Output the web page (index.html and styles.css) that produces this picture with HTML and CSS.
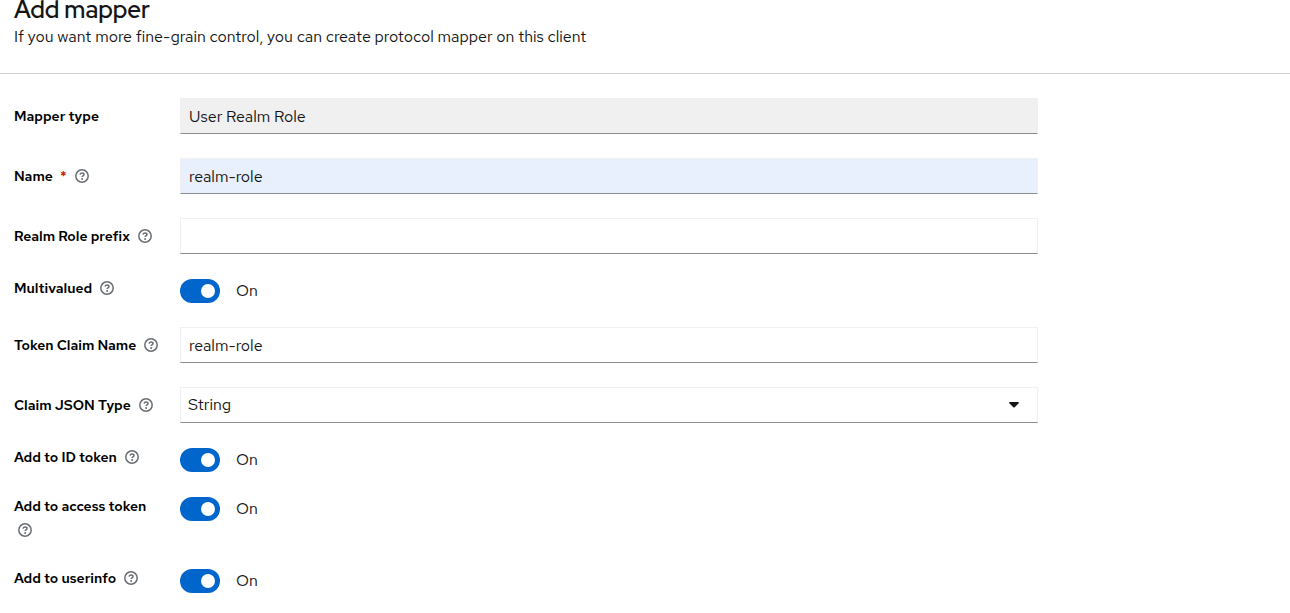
FILE: index.html
```html
<!DOCTYPE html>
<html lang="en">
<head>
<meta charset="utf-8">
<meta name="viewport" content="width=device-width, initial-scale=1">
<title>Add mapper</title>
<link rel="stylesheet" href="styles.css">
</head>
<body>
<svg class="sprite" aria-hidden="true">
  <symbol id="help" viewBox="0 0 14 14">
    <circle cx="7" cy="7" r="6.2" fill="none" stroke="currentColor" stroke-width="1.5"/>
    <path d="M5 5.600c.3-1 1-1.500 2-1.500 1.200 0 2 .6 2 1.500 0 1.300-1.900 1.300-1.900 2.500" fill="none" stroke="currentColor" stroke-width="1.500"/>
    <circle cx="7.100" cy="9.900" r="1" fill="currentColor"/>
  </symbol>
</svg>
<header class="page-header">
  <h1 class="title">Add mapper</h1>
  <p class="subtitle">If you want more fine-grain control, you can create protocol mapper on this client</p>
</header>
<main class="page-main">
  <form class="form">
    <div class="row">
      <div class="label-cell"><label class="label" for="type">Mapper type</label></div>
      <input class="text-input readonly" id="type" type="text" value="User Realm Role" readonly>
    </div>
    <div class="row">
      <div class="label-cell"><label class="label" for="name">Name <span class="required">*</span></label><button class="help" type="button" aria-label="Help for Name"><svg class="help-icon"><use href="#help"/></svg></button></div>
      <input class="text-input autofilled" id="name" type="text" value="realm-role" required>
    </div>
    <div class="row">
      <div class="label-cell"><label class="label" for="prefix">Realm Role prefix</label><button class="help" type="button" aria-label="Help for Realm Role prefix"><svg class="help-icon"><use href="#help"/></svg></button></div>
      <input class="text-input" id="prefix" type="text">
    </div>
    <div class="row switch-row">
      <div class="label-cell"><label class="label" for="multi">Multivalued</label><button class="help" type="button" aria-label="Help for Multivalued"><svg class="help-icon"><use href="#help"/></svg></button></div>
      <div class="switch"><input class="toggle" id="multi" type="checkbox" role="switch" checked><label class="state" for="multi">On</label></div>
    </div>
    <div class="row">
      <div class="label-cell"><label class="label" for="claim">Token Claim Name</label><button class="help" type="button" aria-label="Help for Token Claim Name"><svg class="help-icon"><use href="#help"/></svg></button></div>
      <input class="text-input" id="claim" type="text" value="realm-role">
    </div>
    <div class="row">
      <div class="label-cell"><label class="label" for="json">Claim JSON Type</label><button class="help" type="button" aria-label="Help for Claim JSON Type"><svg class="help-icon"><use href="#help"/></svg></button></div>
      <div class="select-wrap">
        <select class="select" id="json"><option>String</option></select>
        <svg class="caret" viewBox="0 0 10 6" aria-hidden="true"><path d="M.8 0h8.400c.7 0 1 .8.500 1.300L5.700 5.200a1 1 0 0 1-1.400 0L.3 1.300C-.2.8.1 0 .8 0z" fill="currentColor"/></svg>
      </div>
    </div>
    <div class="row switch-row">
      <div class="label-cell"><label class="label" for="idt">Add to ID token</label><button class="help" type="button" aria-label="Help for Add to ID token"><svg class="help-icon"><use href="#help"/></svg></button></div>
      <div class="switch"><input class="toggle" id="idt" type="checkbox" role="switch" checked><label class="state" for="idt">On</label></div>
    </div>
    <div class="row switch-row">
      <div class="label-cell"><label class="label" for="access">Add to access token</label><button class="help" type="button" aria-label="Help for Add to access token"><svg class="help-icon"><use href="#help"/></svg></button></div>
      <div class="switch"><input class="toggle" id="access" type="checkbox" role="switch" checked><label class="state" for="access">On</label></div>
    </div>
    <div class="row switch-row">
      <div class="label-cell"><label class="label" for="info">Add to userinfo</label><button class="help" type="button" aria-label="Help for Add to userinfo"><svg class="help-icon"><use href="#help"/></svg></button></div>
      <div class="switch"><input class="toggle" id="info" type="checkbox" role="switch" checked><label class="state" for="info">On</label></div>
    </div>
  </form>
</main>
</body>
</html>
```
FILE: styles.css
```css
* { box-sizing: border-box; }
body {
  margin: 0;
  background: #fff;
  color: #151515;
  font-family: "Red Hat Text", Inter, "Liberation Sans", sans-serif;
  font-size: 16px;
  line-height: 24px;
}
.sprite { display: none; }
.page-header {
  padding: 0 14px 24px;
  border-bottom: 1px solid #d2d2d2;
}
.title {
  margin: 0 0 5px;
  font-family: "Red Hat Display", "Red Hat Text", Inter, sans-serif;
  font-size: 24px;
  font-weight: 600;
  line-height: 20px;
}
.subtitle { margin: 0; }
.page-main { padding: 24px 14px 20px; }
.form {
  display: grid;
  gap: 24px;
  max-width: 1024px;
}
.row {
  display: grid;
  grid-template-columns: 150px minmax(0, 1fr);
  column-gap: 16px;
  align-items: start;
}
.label-cell {
  display: flex;
  flex-wrap: wrap;
  gap: 4px;
  padding-top: 8px;
}
.label {
  color: #000;
  font-size: 14px;
  font-weight: 575;
  line-height: 20px;
  white-space: nowrap;
}
.required {
  margin-left: 4px;
  color: #c9190b;
}
.help {
  display: flex;
  align-items: center;
  height: 20px;
  padding: 0 4px;
  border: 0;
  background: none;
  color: #6a6e73;
}
.help-icon { width: 14px; height: 14px; }
.text-input, .select {
  display: block;
  width: 100%;
  height: 36px;
  padding: 0 8px;
  border: 1px solid #f0f0f0;
  border-bottom-color: #8a8d90;
  border-radius: 0;
  background: #fff;
  color: #151515;
  font: inherit;
}
.readonly { background: #f0f0f0; }
.autofilled { background: #e8f0fe; }
.select-wrap { position: relative; }
.select { appearance: none; padding: 0 7px; }
.caret {
  position: absolute;
  top: 15px;
  right: 19px;
  width: 10px;
  height: 6px;
  pointer-events: none;
}
.switch-row .label-cell { padding: 0 0 4px; }
.switch {
  display: flex;
  align-items: center;
  gap: 16px;
  padding-top: 1px;
}
.toggle {
  display: flex;
  align-items: center;
  justify-content: flex-end;
  appearance: none;
  width: 40px;
  height: 24px;
  margin: 0;
  padding: 0 5px;
  border-radius: 12px;
  background: #8a8d90;
}
.toggle:checked { background: #06c; }
.toggle:not(:checked) { justify-content: flex-start; }
.toggle::before {
  content: "";
  width: 14px;
  height: 14px;
  border-radius: 50%;
  background: #fff;
}
```
